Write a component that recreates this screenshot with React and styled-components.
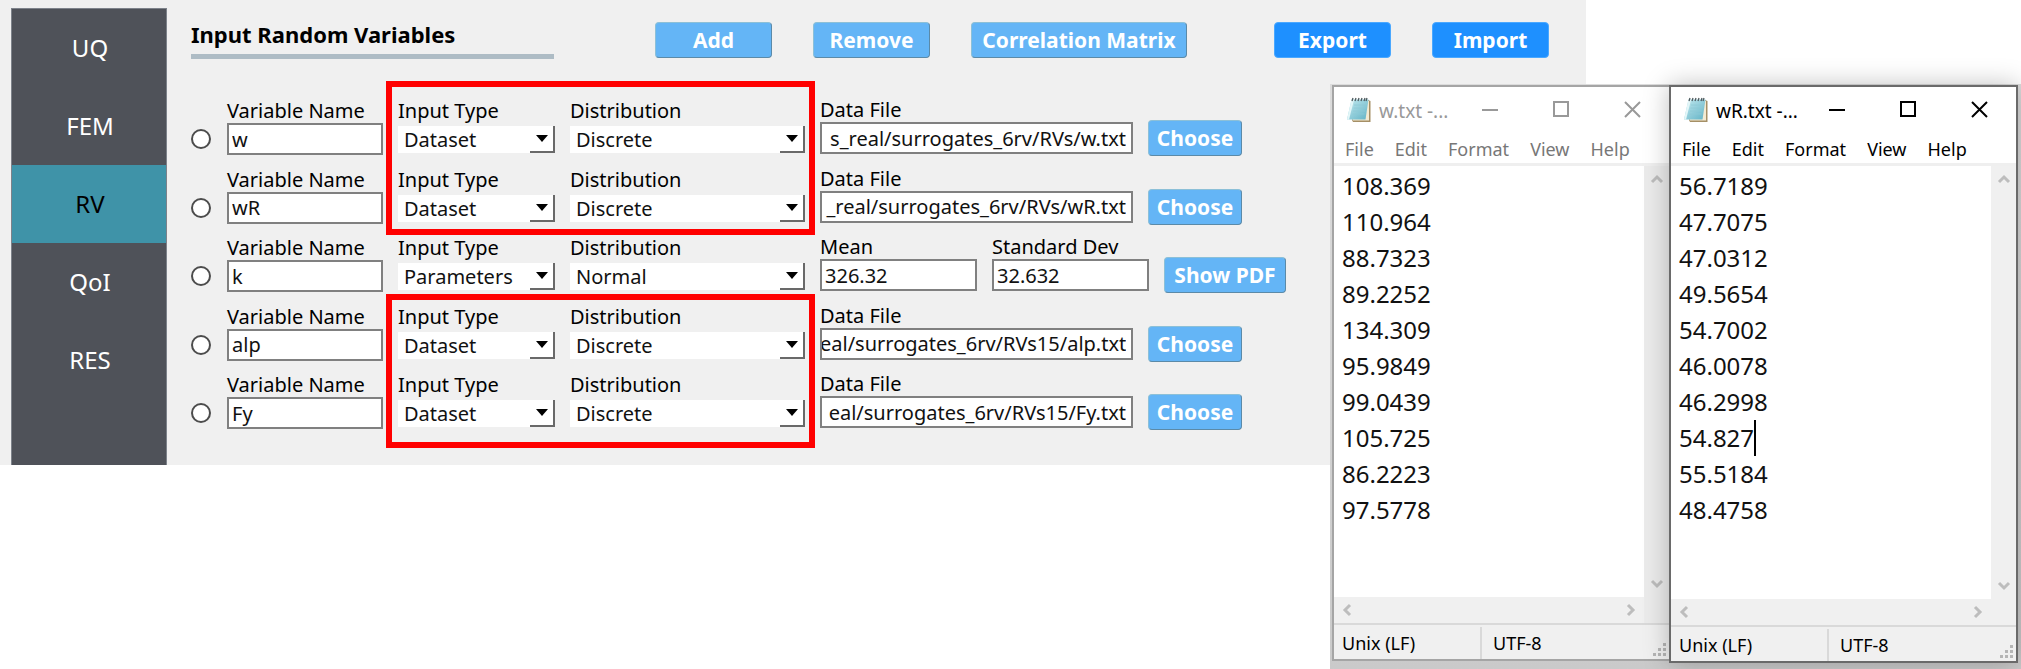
import React, { useLayoutEffect, useRef } from 'react';
import styled, { createGlobalStyle } from 'styled-components';

const Global = createGlobalStyle`
  *, *::before, *::after { box-sizing: border-box; }
  html, body { margin: 0; background: #fff; overflow: hidden; }
  body, button, input, select, textarea { font-family: "Noto Sans", "Open Sans", sans-serif; }
`;

const Desktop = styled.div`
  position: relative;
  min-height: 100vh;
`;

const AppPanel = styled.main`
  display: flex;
  margin-right: 435px;
  padding: 8px 0 0 11px;
  background: #f0f0f0;
`;

const SideNav = styled.nav`
  flex: none;
  width: 156px;
  min-height: 457px;
  border: 1px solid #7d828a;
  border-bottom: 0;
  background: #4f5259;
`;

const NavItem = styled.a`
  display: flex;
  align-items: center;
  justify-content: center;
  height: 78px;
  padding: 0 0 2px 2px;
  font-size: 24px;
  text-decoration: none;
  color: ${p => (p.$active ? '#000' : '#fff')};
  background: ${p => (p.$active ? '#3f93a8' : 'transparent')};
`;

const Content = styled.section`
  flex: 1;
  min-width: 0;
  display: flex;
  flex-direction: column;
  padding: 0 37px 32px 24px;
`;

const Header = styled.header`
  display: flex;
  align-items: flex-start;
  height: 82px;
  padding-top: 14px;
`;

const Title = styled.h1`
  width: 363px;
  height: 37px;
  margin: 0 101px 0 0;
  border-bottom: 5px solid #aebcc5;
  font-size: 22px;
  line-height: 24px;
  white-space: nowrap;
`;

const Button = styled.button`
  flex: none;
  height: 36px;
  width: ${p => p.$w}px;
  padding: 0;
  border: 1px solid;
  border-color: ${p => (p.$strong ? '#4aa8ff' : '#8cc0d8 #5b8aa8 #5b8aa8 #8cc0d8')};
  border-radius: 4px;
  background: ${p => (p.$strong ? '#1e90ff' : '#64b5f6')};
  color: #fff;
  font-size: 21px;
  font-weight: 700;
  line-height: 34px;
  white-space: nowrap;
`;

const ButtonGroup = styled.div`
  display: flex;
  gap: 41px;
  &:last-child { margin-left: auto; }
`;

const Rows = styled.div`
  flex: 1;
  display: grid;
  grid-template-rows: repeat(5, 1fr);
  position: relative;
`;

const Row = styled.div`
  display: flex;
  align-items: flex-start;
  min-height: 0;
`;

const Radio = styled.input`
  appearance: none;
  flex: none;
  width: 20px;
  height: 20px;
  margin: 39px 16px 0 0;
  border: 2px solid #4c4c4c;
  border-radius: 50%;
  background: #fff;
`;

const Field = styled.label`
  flex: none;
  display: flex;
  flex-direction: column;
  width: ${p => p.$w}px;
  margin: ${p => (p.$raised ? 7 : 8)}px 15px 0 0;
  font-size: 20px;
  line-height: 25px;
  white-space: nowrap;
`;

const TextInput = styled.input`
  width: 100%;
  height: 32px;
  padding: 0 3px;
  border: 2px solid #808080;
  background: #fff;
  font-size: 20px;
  color: #111;
`;

const PathBox = styled(TextInput)`
  text-align: right;
  padding: 0 5px 0 0;
`;

const SelectBox = styled.span`
  position: relative;
  display: block;
  height: 27px;
  margin-top: 3px;
  background: #fff;
`;

const Select = styled.select`
  appearance: none;
  width: 100%;
  height: 100%;
  padding: 0 28px 0 6px;
  border: 0;
  background: transparent;
  font-size: 20px;
  line-height: 27px;
  color: #111;
`;

const DropMark = styled.span`
  position: absolute;
  right: 0;
  top: 0;
  display: flex;
  align-items: center;
  justify-content: center;
  width: 25px;
  height: 27px;
  border-right: 2px solid #696969;
  border-bottom: 2px solid #696969;
  pointer-events: none;
`;

const RowButton = styled(Button)`
  margin-top: 30px;
`;

const Highlight = styled.div`
  position: absolute;
  left: 195px;
  top: ${p => p.$top}px;
  width: 429px;
  height: 154px;
  border: 6px solid #f00;
  pointer-events: none;
`;

const Capture = styled.div`
  position: absolute;
  top: 84px;
  right: 0;
  display: flex;
  align-items: flex-start;
  width: 691px;
  padding: 1px 3px 0 2px;
  height: 585px;
  background: linear-gradient(#dcdcdc, #cacaca);
`;

const Window = styled.article`
  position: relative;
  display: flex;
  flex-direction: column;
  flex: ${p => (p.$active ? '0 0 349px' : '1')};
  height: ${p => (p.$active ? 578 : 576)}px;
  border: 2px solid ${p => (p.$active ? '#6a6a6a' : '#a5a5a5')};
  border-right-width: ${p => (p.$active ? 2 : 0)}px;
  background: #fff;
  color: ${p => (p.$active ? '#000' : '#777')};
  box-shadow: ${p => (p.$active ? '0 0 24px rgba(0,0,0,.25)' : 'none')};
  z-index: ${p => (p.$active ? 1 : 0)};
`;

const TitleBar = styled.div`
  display: flex;
  align-items: center;
  height: 45px;
  padding: 0 28px 0 12px;
  color: ${p => (p.$active ? '#000' : '#999')};
  svg { flex: none; }
`;

const WindowName = styled.h2`
  flex: 1;
  margin: 2px 0 0 7px;
  font-size: 19px;
  font-weight: 400;
  white-space: nowrap;
`;

const WindowControls = styled.div`
  display: flex;
  gap: 54px;
`;

const IconButton = styled.button`
  display: flex;
  padding: 0;
  border: 0;
  background: none;
  color: inherit;
`;

const MenuBar = styled.nav`
  display: flex;
  gap: 21px;
  height: 34px;
  padding: 3px 11px 0;
  border-bottom: 3px solid #efefef;
  a { color: inherit; text-decoration: none; font-size: 18px; line-height: 28px; }
`;

const Body = styled.div`
  flex: 1;
  display: grid;
  grid-template-columns: 1fr 25px;
  grid-template-rows: 1fr 26px;
  background: ${p => (p.$active ? '#f0f0f0' : '#ebebeb')};
`;

const Editor = styled.div`
  background: #fff;
  color: #111;
  font-size: 24px;
  line-height: 36px;
  padding: 2px 8px;
  p { margin: 0; }
`;

const Caret = styled.i`
  display: inline-block;
  width: 2px;
  height: 36px;
  vertical-align: top;
  background: #000;
`;

const VScroll = styled.div`
  display: flex;
  flex-direction: column;
  justify-content: space-between;
  align-items: center;
  padding: 7px 0;
`;

const HScroll = styled.div`
  display: flex;
  justify-content: space-between;
  align-items: center;
  padding: 0 7px;
  background: #f0f0f0;
`;

const StatusBar = styled.footer`
  display: grid;
  grid-template-columns: ${p => (p.$active ? 156 : 146)}px 1fr auto;
  height: 36px;
  padding-top: 2px;
  border-top: 2px solid #d9d9d9;
  background: #f0f0f0;
  color: #000;
  font-size: 18px;
  line-height: 32px;
  span { padding-left: 8px; }
  span + span { padding-left: 11px; border-left: 2px solid #d9d9d9; }
  svg { align-self: end; margin: 0 3px 3px 0; }
`;

const NotepadIcon = () => (
  <svg width="26" height="26" viewBox="0 0 26 26" aria-hidden="true">
    <defs>
      <linearGradient id="page" x1="0" y1="0" x2="1" y2="1">
        <stop offset="0" stopColor="#c3e9ef" />
        <stop offset="1" stopColor="#62b3c6" />
      </linearGradient>
    </defs>
    <path d="M22 3l2.500 1v21H7l-1-2z" fill="#a58f66" />
    <path d="M7 4h16v19.500H7z" fill="#f3ead2" />
    <path d="M5.500 2.500h17L19.500 22.500H1z" fill="url(#page)" />
    <path d="M5.500 2.500L1 22.500l2 .300L8 3z" fill="#e3f6f8" />
    <path d="M6 4l1-3m2 3l1-3m2 3l1-3m2 3l1-3m2 3l1-3m1 3l1-3" stroke="#4e5a5e" strokeWidth="1.300" />
    <path d="M8 8h12M7.500 11h12M7 14h12M6.500 17h12" stroke="#8dc9d5" strokeWidth=".8" />
  </svg>
);

const controlPaths = {
  Minimize: 'M0 9h16',
  Maximize: 'M1 1h14v14H1z',
  Close: 'M1 1l15 15M16 1L1 16',
};

const chevrons = {
  up: 'M2 9l5-5 5 5',
  down: 'M2 5l5 5 5-5',
  left: 'M9 2L4 7l5 5',
  right: 'M5 2l5 5-5 5',
};

const Chevron = ({ dir }) => (
  <svg width="14" height="14" viewBox="0 0 14 14" aria-hidden="true">
    <path d={chevrons[dir]} fill="none" stroke="#bdbdbd" strokeWidth="3" />
  </svg>
);

const Grip = () => (
  <svg width="13" height="13" viewBox="0 0 13 13" fill="#b5b5b5" aria-hidden="true">
    <path d="M10 0h3v3h-3zM5 5h3v3H5zM10 5h3v3h-3zM0 10h3v3H0zM5 10h3v3H5zM10 10h3v3h-3z" />
  </svg>
);

function Notepad({ title, lines, active, caretLine }) {
  return (
    <Window $active={active}>
      <TitleBar $active={active}>
        <NotepadIcon />
        <WindowName>{title}</WindowName>
        <WindowControls>
          {Object.entries(controlPaths).map(([name, d]) => (
            <IconButton key={name} type="button" aria-label={name}>
              <svg width="17" height="17" viewBox="0 0 17 17"><path d={d} fill="none" stroke="currentColor" strokeWidth="2" /></svg>
            </IconButton>
          ))}
        </WindowControls>
      </TitleBar>
      <MenuBar>
        {['File', 'Edit', 'Format', 'View', 'Help'].map(m => <a href="#menu" key={m}>{m}</a>)}
      </MenuBar>
      <Body $active={active}>
        <Editor>
          {lines.map((l, i) => <p key={l}>{l}{i === caretLine && <Caret />}</p>)}
        </Editor>
        <VScroll><Chevron dir="up" /><Chevron dir="down" /></VScroll>
        <HScroll><Chevron dir="left" /><Chevron dir="right" /></HScroll>
      </Body>
      <StatusBar $active={active}>
        <span>Unix (LF)</span>
        <span>UTF-8</span>
        <Grip />
      </StatusBar>
    </Window>
  );
}

function Dropdown({ label, value, options, width }) {
  return (
    <Field $w={width}>
      {label}
      <SelectBox>
        <Select defaultValue={value}>
          {options.map(o => <option key={o}>{o}</option>)}
        </Select>
        <DropMark>
          <svg width="12" height="7" viewBox="0 0 12 7" aria-hidden="true"><path d="M0 0h12L6 7z" /></svg>
        </DropMark>
      </SelectBox>
    </Field>
  );
}

// Shows the end of a path that is longer than its box.
function PathInput({ value }) {
  const ref = useRef(null);
  useLayoutEffect(() => {
    ref.current.scrollLeft = ref.current.scrollWidth;
  }, [value]);
  return <PathBox ref={ref} defaultValue={value} />;
}

const variables = [
  { name: 'w', file: 's_real/surrogates_6rv/RVs/w.txt' },
  { name: 'wR', file: '_real/surrogates_6rv/RVs/wR.txt' },
  { name: 'k', mean: '326.32', dev: '32.632' },
  { name: 'alp', file: 'eal/surrogates_6rv/RVs15/alp.txt' },
  { name: 'Fy', file: 'eal/surrogates_6rv/RVs15/Fy.txt' },
];

function VariableRow({ v }) {
  return (
    <Row>
      <Radio type="radio" name="variable" aria-label={`Select ${v.name}`} />
      <Field $w={156}>Variable Name<TextInput defaultValue={v.name} /></Field>
      <Dropdown label="Input Type" width={157} value={v.file ? 'Dataset' : 'Parameters'} options={['Dataset', 'Parameters']} />
      <Dropdown label="Distribution" width={235} value={v.file ? 'Discrete' : 'Normal'} options={['Discrete', 'Normal']} />
      {v.file ? (
        <>
          <Field $w={313} $raised>Data File<PathInput value={v.file} /></Field>
          <RowButton type="button" $w={94}>Choose</RowButton>
        </>
      ) : (
        <>
          <Field $w={157} $raised>Mean<TextInput defaultValue={v.mean} /></Field>
          <Field $w={157} $raised>Standard Dev<TextInput defaultValue={v.dev} /></Field>
          <RowButton type="button" $w={122}>Show PDF</RowButton>
        </>
      )}
    </Row>
  );
}

export default function App() {
  return (
    <Desktop>
      <Global />
      <AppPanel>
        <SideNav>
          {['UQ', 'FEM', 'RV', 'QoI', 'RES'].map(n => (
            <NavItem key={n} href={`#${n}`} $active={n === 'RV'}>{n}</NavItem>
          ))}
        </SideNav>
        <Content>
          <Header>
            <Title>Input Random Variables</Title>
            <ButtonGroup>
              <Button type="button" $w={117}>Add</Button>
              <Button type="button" $w={117}>Remove</Button>
              <Button type="button" $w={216}>Correlation Matrix</Button>
            </ButtonGroup>
            <ButtonGroup>
              <Button type="button" $w={117} $strong>Export</Button>
              <Button type="button" $w={117} $strong>Import</Button>
            </ButtonGroup>
          </Header>
          <Rows>
            {variables.map(v => <VariableRow key={v.name} v={v} />)}
            <Highlight $top={-9} />
            <Highlight $top={204} />
          </Rows>
        </Content>
      </AppPanel>
      <Capture>
        <Notepad
          title="w.txt -..."
          lines={['108.369', '110.964', '88.7323', '89.2252', '134.309', '95.9849', '99.0439', '105.725', '86.2223', '97.5778']}
        />
        <Notepad
          active
          title="wR.txt -..."
          caretLine={7}
          lines={['56.7189', '47.7075', '47.0312', '49.5654', '54.7002', '46.0078', '46.2998', '54.827', '55.5184', '48.4758']}
        />
      </Capture>
    </Desktop>
  );
}
